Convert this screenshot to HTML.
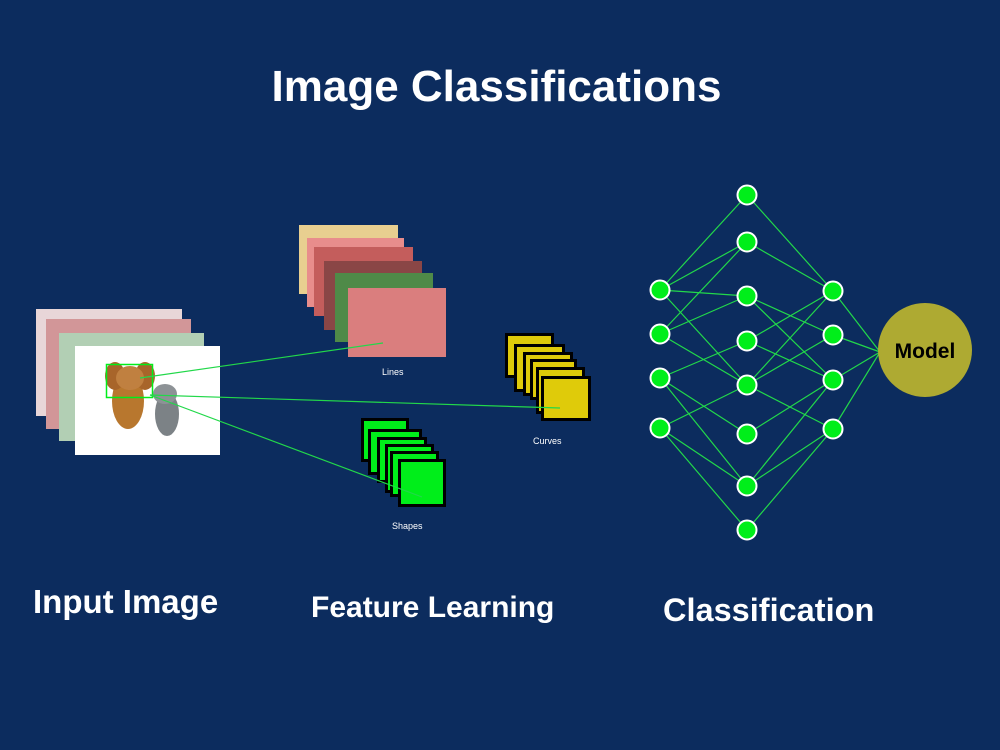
<!DOCTYPE html>
<html><head><meta charset="utf-8"><style>
html,body{margin:0;padding:0;}
body{width:1000px;height:750px;background:#0c2c5e;position:relative;overflow:hidden;font-family:"Liberation Sans",sans-serif;}
.t{position:absolute;color:#fff;white-space:nowrap;}
.b{position:absolute;box-sizing:border-box;}
</style></head><body>
<div class="t" style="left:0;width:993px;text-align:center;top:62px;font-size:44px;font-weight:bold;">Image Classifications</div>
<div class="t" style="left:33px;top:583px;font-size:33px;font-weight:bold;">Input Image</div>
<div class="t" style="left:311px;top:591px;font-size:30px;font-weight:bold;">Feature Learning</div>
<div class="t" style="left:663px;top:592px;font-size:32.5px;font-weight:bold;">Classification</div>

<div class="b" style="left:36px;top:309px;width:146px;height:107px;background:#e8d6d8"></div>
<div class="b" style="left:46px;top:319px;width:145px;height:110px;background:#d29698"></div>
<div class="b" style="left:59px;top:333px;width:145px;height:108px;background:#b2cfb4"></div>
<div class="b" style="left:75px;top:346px;width:145px;height:109px;background:#fff"></div>
<svg class="b" style="left:75px;top:346px" width="145" height="109">
<ellipse cx="53" cy="55" rx="16" ry="28" fill="#b8772e"/>
<ellipse cx="40" cy="30" rx="10" ry="14" fill="#a8652a"/>
<ellipse cx="70" cy="30" rx="10" ry="14" fill="#a8652a"/>
<ellipse cx="55" cy="32" rx="14" ry="12" fill="#c08040"/>
<ellipse cx="92" cy="68" rx="12" ry="22" fill="#7c8286"/>
<ellipse cx="90" cy="48" rx="12" ry="10" fill="#8d9296"/>
</svg>

<div class="b" style="left:299px;top:225px;width:99px;height:69px;background:#e8cf90"></div>
<div class="b" style="left:307px;top:238px;width:97px;height:69px;background:#e88d8c"></div>
<div class="b" style="left:314px;top:247px;width:99px;height:69px;background:#c45d5c"></div>
<div class="b" style="left:324px;top:261px;width:98px;height:69px;background:#8a4646"></div>
<div class="b" style="left:335px;top:273px;width:98px;height:69px;background:#4f8a48"></div>
<div class="b" style="left:348px;top:288px;width:98px;height:69px;background:#da7e7e"></div>
<div class="t" style="left:382px;top:367px;font-size:9px;">Lines</div>

<div class="b" style="left:505px;top:333px;width:49px;height:45px;background:#dfcb0a;border:3px solid #000"></div>
<div class="b" style="left:514px;top:344px;width:51px;height:48px;background:#dfcb0a;border:3px solid #000"></div>
<div class="b" style="left:523px;top:352px;width:50px;height:44px;background:#dfcb0a;border:3px solid #000"></div>
<div class="b" style="left:530px;top:359px;width:47px;height:41px;background:#dfcb0a;border:3px solid #000"></div>
<div class="b" style="left:536px;top:367px;width:49px;height:47px;background:#dfcb0a;border:3px solid #000"></div>
<div class="b" style="left:541px;top:376px;width:50px;height:45px;background:#dfcb0a;border:3px solid #000"></div>
<div class="t" style="left:533px;top:436px;font-size:9px;">Curves</div>

<div class="b" style="left:361px;top:418px;width:48px;height:44px;background:#00ee1a;border:3px solid #000"></div>
<div class="b" style="left:368px;top:429px;width:54px;height:46px;background:#00ee1a;border:3px solid #000"></div>
<div class="b" style="left:377px;top:437px;width:50px;height:46px;background:#00ee1a;border:3px solid #000"></div>
<div class="b" style="left:385px;top:444px;width:49px;height:49px;background:#00ee1a;border:3px solid #000"></div>
<div class="b" style="left:390px;top:451px;width:49px;height:46px;background:#00ee1a;border:3px solid #000"></div>
<div class="b" style="left:398px;top:459px;width:48px;height:48px;background:#00ee1a;border:3px solid #000"></div>
<div class="t" style="left:392px;top:521px;font-size:9px;">Shapes</div>

<svg class="b" style="left:0;top:0" width="1000" height="750">
<g stroke="#22d84a" stroke-width="1.2" fill="none">
<rect x="106.5" y="364.5" width="46" height="33" stroke="#00ee1a" stroke-width="1.5"/>
<line x1="140" y1="378" x2="383" y2="343"/>
<line x1="150" y1="395" x2="560" y2="408"/>
<line x1="150" y1="395" x2="422" y2="497"/>
<path d="M660 290L747 195M660 290L747 242M660 290L747 296M660 290L747 385M660 334L747 242M660 334L747 296M660 334L747 385M660 378L747 341M660 378L747 434M660 378L747 486M660 428L747 385M660 428L747 486M660 428L747 530M747 195L833 291M747 242L833 291M747 296L833 335M747 296L833 380M747 341L833 291M747 341L833 380M747 385L833 291M747 385L833 335M747 385L833 429M747 434L833 380M747 486L833 380M747 486L833 429M747 530L833 429M833 291L880 352M833 335L880 352M833 380L880 352M833 429L880 352"/>
</g>
<g fill="#00ee1a" stroke="#fff" stroke-width="2">
<circle cx="660" cy="290" r="9.5"/><circle cx="660" cy="334" r="9.5"/><circle cx="660" cy="378" r="9.5"/><circle cx="660" cy="428" r="9.5"/>
<circle cx="747" cy="195" r="9.5"/><circle cx="747" cy="242" r="9.5"/><circle cx="747" cy="296" r="9.5"/><circle cx="747" cy="341" r="9.5"/><circle cx="747" cy="385" r="9.5"/><circle cx="747" cy="434" r="9.5"/><circle cx="747" cy="486" r="9.5"/><circle cx="747" cy="530" r="9.5"/>
<circle cx="833" cy="291" r="9.5"/><circle cx="833" cy="335" r="9.5"/><circle cx="833" cy="380" r="9.5"/><circle cx="833" cy="429" r="9.5"/>
</g>
<circle cx="925" cy="350" r="47" fill="#aeaa32"/>
<text x="925" y="358" text-anchor="middle" font-family="Liberation Sans" font-weight="bold" font-size="21" fill="#000">Model</text>
</svg>
</body></html>
